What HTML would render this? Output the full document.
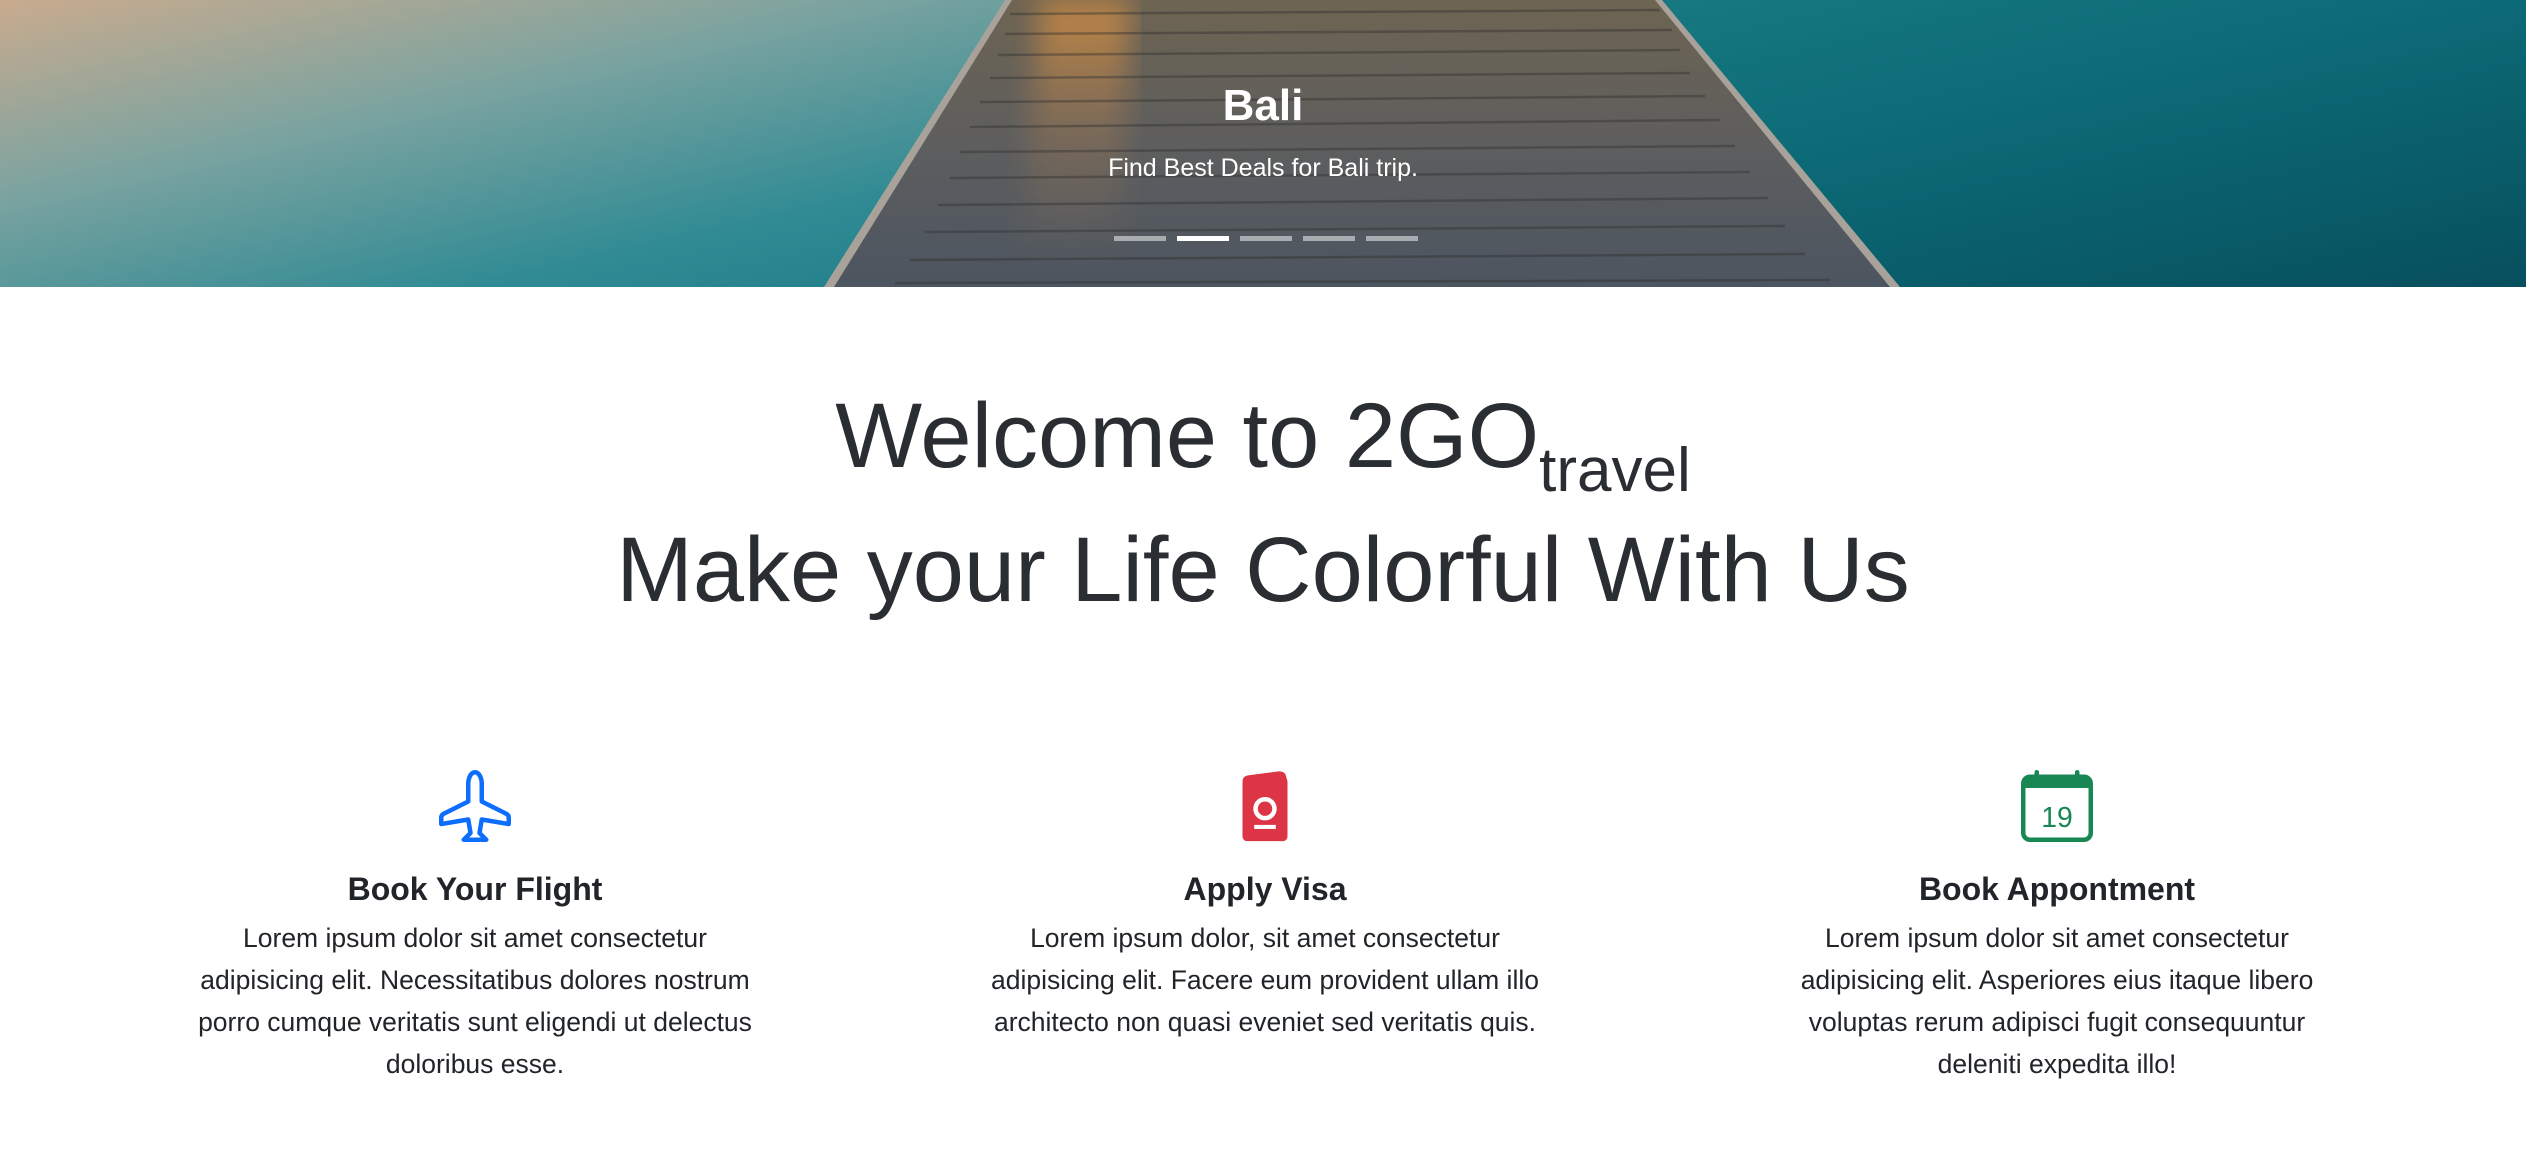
<!DOCTYPE html>
<html><head><meta charset="utf-8">
<style>
*{margin:0;padding:0;box-sizing:border-box}
body{width:2526px;height:1164px;background:#fff;font-family:"Liberation Sans",sans-serif;color:#212529;overflow:hidden;position:relative}
.hero{position:absolute;left:0;top:0;width:2526px;height:287px;overflow:hidden}
.abs{position:absolute;left:0;width:2526px;text-align:center;color:#fff}
.h1{position:absolute;left:0;width:2526px;text-align:center;font-weight:300;font-size:92px;line-height:1;white-space:nowrap;color:#2a2e33}
.col{position:absolute;width:760px;text-align:center}
.col h3{font-size:32px;font-weight:bold;margin-top:22px;line-height:40px}
.col p{font-size:26.5px;line-height:42px;margin-top:8px;white-space:nowrap}
</style></head><body>
<div class="hero">
<svg width="2526" height="287" viewBox="0 0 2526 287">
<defs>
<linearGradient id="l" x1="0" y1="0" x2="1" y2="1">
<stop offset="0" stop-color="#c9ab8e"/><stop offset="0.35" stop-color="#7aa3a0"/><stop offset="0.7" stop-color="#2e8a93"/><stop offset="1" stop-color="#1a7682"/></linearGradient>
<linearGradient id="r" x1="0" y1="0" x2="1" y2="1">
<stop offset="0" stop-color="#1c7f86"/><stop offset="0.5" stop-color="#0c6a76"/><stop offset="1" stop-color="#074f5e"/></linearGradient>
<linearGradient id="p" x1="0" y1="0" x2="0" y2="1">
<stop offset="0" stop-color="#6e6452"/><stop offset="0.5" stop-color="#5e5e5e"/><stop offset="1" stop-color="#4c5560"/></linearGradient>
<linearGradient id="g" x1="0" y1="0" x2="0" y2="1">
<stop offset="0" stop-color="#e6953f" stop-opacity=".7"/><stop offset="0.5" stop-color="#c98a4a" stop-opacity=".25"/><stop offset="1" stop-color="#c98a4a" stop-opacity="0"/></linearGradient>
<filter id="b"><feGaussianBlur stdDeviation="14"/></filter>
</defs>
<rect width="1263" height="287" fill="url(#l)"/>
<rect x="1263" width="1263" height="287" fill="url(#r)"/>
<polygon points="1005,0 1662,0 1900,287 824,287" fill="#a8a29a"/>
<polygon points="1012,0 1655,0 1890,287 834,287" fill="url(#p)"/>
<polygon points="1040,0 1130,0 1120,260 1020,260" fill="url(#g)" filter="url(#b)"/>
<g stroke="#2e2e2e" stroke-width="2.5" opacity=".4">
<line x1="1010" y1="14" x2="1660" y2="10"/><line x1="1005" y1="34" x2="1672" y2="30"/>
<line x1="998" y1="55" x2="1680" y2="50"/><line x1="990" y1="78" x2="1690" y2="73"/>
<line x1="980" y1="102" x2="1705" y2="96"/><line x1="970" y1="127" x2="1720" y2="120"/>
<line x1="960" y1="152" x2="1735" y2="146"/><line x1="950" y1="178" x2="1750" y2="172"/>
<line x1="938" y1="205" x2="1768" y2="198"/><line x1="925" y1="232" x2="1785" y2="226"/>
<line x1="910" y1="260" x2="1805" y2="254"/><line x1="895" y1="283" x2="1830" y2="280"/>
</g>
</svg>
<div class="abs" style="top:78px;font-size:44px;font-weight:bold;line-height:56px">Bali</div>
<div class="abs" style="top:152px;font-size:25px;line-height:32px">Find Best Deals for Bali trip.</div>
<div style="position:absolute;top:236px;left:1114px;display:flex;gap:11px">
<div style="width:52px;height:5px;background:#fff;opacity:.5"></div>
<div style="width:52px;height:5px;background:#fff"></div>
<div style="width:52px;height:5px;background:#fff;opacity:.5"></div>
<div style="width:52px;height:5px;background:#fff;opacity:.5"></div>
<div style="width:52px;height:5px;background:#fff;opacity:.5"></div>
</div>
</div>
<div class="h1" style="top:390px">Welcome to 2GO<span style="font-size:62px;position:relative;top:24px">travel</span></div>
<div class="h1" style="top:524px">Make your Life Colorful With Us</div>

<div class="col" style="left:95px;top:770px">
<svg width="72" height="72" viewBox="0 0 16 16" fill="#0d6efd"><path d="M6.428 1.151C6.708.591 7.213 0 8 0s1.292.592 1.572 1.151C9.861 1.73 10 2.431 10 3v3.691l5.17 2.585a1.5 1.5 0 0 1 .83 1.342V12a.5.5 0 0 1-.582.493l-5.507-.918-.375 2.253 1.318 1.318A.5.5 0 0 1 10.5 16h-5a.5.5 0 0 1-.354-.854l1.319-1.318-.376-2.253-5.507.918A.5.5 0 0 1 0 12v-1.382a1.5 1.5 0 0 1 .83-1.342L6 6.691V3c0-.568.14-1.271.428-1.849m.894.448C7.111 2.02 7 2.569 7 3v4a.5.5 0 0 1-.276.447l-5.448 2.724a.5.5 0 0 0-.276.447v.792l5.418-.903a.5.5 0 0 1 .575.41l.5 3a.5.5 0 0 1-.14.437L6.708 15h2.586l-.647-.646a.5.5 0 0 1-.14-.436l.5-3a.5.5 0 0 1 .576-.411L15 11.41v-.792a.5.5 0 0 0-.276-.447L9.276 7.447A.5.5 0 0 1 9 7V3c0-.432-.11-.979-.322-1.401C8.458 1.159 8.213 1 8 1s-.458.158-.678.599"/></svg>
<h3>Book Your Flight</h3>
<p>Lorem ipsum dolor sit amet consectetur<br>adipisicing elit. Necessitatibus dolores nostrum<br>porro cumque veritatis sunt eligendi ut delectus<br>doloribus esse.</p>
</div>
<div class="col" style="left:885px;top:770px">
<svg width="72" height="72" viewBox="0 0 16 16"><path d="M3 2.6 Q3 1.4 4.2 1.2 L11 0.3 Q12.5 0.2 12.7 1.5 L13 2.5 Q13 1.8 13 3 V14.6 Q13 15.8 11.8 15.8 H4.2 Q3 15.8 3 14.6 Z" fill="#dc3545"/><circle cx="8" cy="8.6" r="2.1" fill="none" stroke="#fff" stroke-width="1"/><rect x="5.6" y="12.2" width="4.8" height=".9" fill="#fff"/></svg>
<h3>Apply Visa</h3>
<p>Lorem ipsum dolor, sit amet consectetur<br>adipisicing elit. Facere eum provident ullam illo<br>architecto non quasi eveniet sed veritatis quis.</p>
</div>
<div class="col" style="left:1677px;top:770px">
<svg width="72" height="72" viewBox="0 0 16 16" fill="#198754"><path d="M3.5 0a.5.5 0 0 1 .5.5V1h8V.5a.5.5 0 0 1 1 0V1h1a2 2 0 0 1 2 2v11a2 2 0 0 1-2 2H2a2 2 0 0 1-2-2V3a2 2 0 0 1 2-2h1V.5a.5.5 0 0 1 .5-.5M1 4v10a1 1 0 0 0 1 1h12a1 1 0 0 0 1-1V4z"/><text x="8" y="12.7" font-size="6.3" text-anchor="middle" font-family="Liberation Sans,sans-serif" fill="#198754">19</text></svg>
<h3>Book Appontment</h3>
<p>Lorem ipsum dolor sit amet consectetur<br>adipisicing elit. Asperiores eius itaque libero<br>voluptas rerum adipisci fugit consequuntur<br>deleniti expedita illo!</p>
</div>
</body></html>
